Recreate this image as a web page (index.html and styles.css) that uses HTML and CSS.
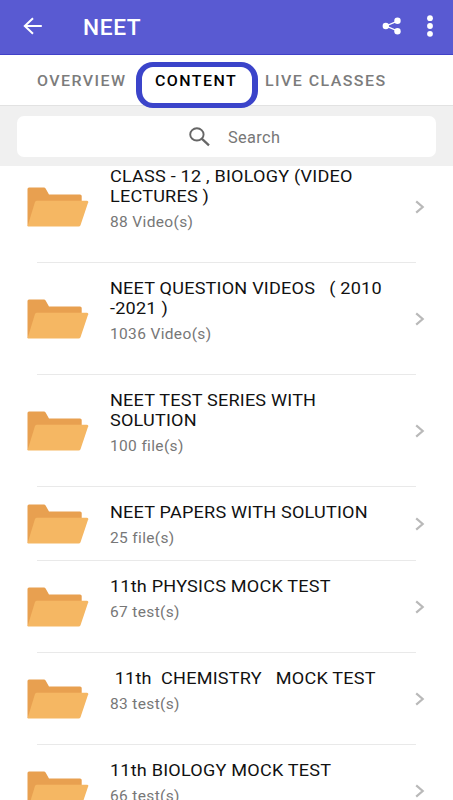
FILE: index.html
```
<!DOCTYPE html>
<html lang="en">
<head>
<meta charset="utf-8">
<title>NEET</title>
<link rel="stylesheet" href="styles.css">
</head>
<body>
<svg class="defs" width="0" height="0">
  <symbol id="folder" viewBox="0 0 62 40">
    <path fill="#e8a050" d="M.5 39V2Q.5 .5 2 .5H17Q18 .5 18.600 1.500L22 7.500H53Q54.700 7.500 54.700 9V15L45 38Z"/>
    <path fill="#f5b763" d="M.6 39.300L8 15Q8.600 13.700 10 13.700H60Q61.700 13.700 61.200 15.200L53.500 38.200Q53 39.500 51.600 39.500H1Z"/>
  </symbol>
  <symbol id="chevron" viewBox="0 0 10 14"><path d="M1.200 1.300L7.700 7L1.200 12.700" fill="none" stroke="#b9b9b9" stroke-width="2.200"/></symbol>
</svg>
<div class="app">
  <header class="bar">
    <svg class="back" viewBox="0 0 20 18"><path d="M18.800 9H2M10 1.300L1.800 9l8.200 7.700" fill="none" stroke="#fff" stroke-width="2"/></svg>
    <h1>NEET</h1>
    <svg class="share" viewBox="0 0 20 18"><path d="M16 3.800L4 9l12 5.200" fill="none" stroke="#fff" stroke-width="1.300"/><g fill="#fff"><circle cx="15.500" cy="3.800" r="3.200"/><circle cx="3.800" cy="9" r="3.200"/><circle cx="15.500" cy="14.200" r="3.200"/></g></svg>
    <svg class="more" viewBox="0 0 8 22"><g fill="#fff"><circle cx="4" cy="3.200" r="2.900"/><circle cx="4" cy="11" r="2.900"/><circle cx="4" cy="18.800" r="2.900"/></g></svg>
  </header>
  <nav class="tabs">
    <div class="tab overview"><span>OVERVIEW</span></div>
    <div class="tab active"><span>CONTENT</span></div>
    <div class="tab live"><span>LIVE CLASSES</span></div>
  </nav>
  <div class="search-area">
    <div class="search">
      <svg viewBox="0 0 22 20"><ellipse cx="7.900" cy="7.400" rx="6.700" ry="6.100" fill="none" stroke="#666" stroke-width="1.900"/><path d="M12.700 11.700L20 18.400" stroke="#666" stroke-width="2.300"/></svg>
      <span>Search</span>
    </div>
  </div>
  <main class="list">
    <section class="row tall first">
      <svg class="folder"><use href="#folder"/></svg>
      <div class="text"><h2>CLASS - 12 , BIOLOGY (VIDEO<br>LECTURES )</h2><p>88 Video(s)</p></div>
      <svg class="chev"><use href="#chevron"/></svg>
    </section>
    <section class="row tall">
      <svg class="folder"><use href="#folder"/></svg>
      <div class="text"><h2>NEET QUESTION VIDEOS   ( 2010<br>-2021 )</h2><p>1036 Video(s)</p></div>
      <svg class="chev"><use href="#chevron"/></svg>
    </section>
    <section class="row tall">
      <svg class="folder"><use href="#folder"/></svg>
      <div class="text"><h2>NEET TEST SERIES WITH<br>SOLUTION</h2><p>100 file(s)</p></div>
      <svg class="chev"><use href="#chevron"/></svg>
    </section>
    <section class="row short">
      <svg class="folder"><use href="#folder"/></svg>
      <div class="text"><h2>NEET PAPERS WITH SOLUTION</h2><p>25 file(s)</p></div>
      <svg class="chev"><use href="#chevron"/></svg>
    </section>
    <section class="row">
      <svg class="folder"><use href="#folder"/></svg>
      <div class="text"><h2>11th PHYSICS MOCK TEST</h2><p>67 test(s)</p></div>
      <svg class="chev"><use href="#chevron"/></svg>
    </section>
    <section class="row">
      <svg class="folder"><use href="#folder"/></svg>
      <div class="text"><h2> 11th  CHEMISTRY   MOCK TEST</h2><p>83 test(s)</p></div>
      <svg class="chev"><use href="#chevron"/></svg>
    </section>
    <section class="row">
      <svg class="folder"><use href="#folder"/></svg>
      <div class="text"><h2>11th BIOLOGY MOCK TEST</h2><p>66 test(s)</p></div>
      <svg class="chev"><use href="#chevron"/></svg>
    </section>
  </main>
</div>
</body>
</html>
```
FILE: styles.css
```
* { box-sizing: border-box; }
body { margin: 0; background: #fff; font-family: Roboto, "Liberation Sans", sans-serif; overflow: hidden; }
.defs { display: block; }
.app { display: flex; flex-direction: column; height: 800px; overflow: hidden; }
h1, h2, p { margin: 0; }
.bar { flex: none; display: flex; align-items: center; height: 55px; padding: 0 19px 2px 23px; background: #595ad2; border-bottom: 1px solid #4141c8; color: #fff; }
.back { width: 20px; height: 18px; }
h1 { flex: 1; margin-left: 40px; padding-top: 2px; font-size: 21.5px; font-weight: 500; letter-spacing: .6px; transform: scaleX(1.055); transform-origin: left; }
.share { width: 20px; height: 18px; margin-right: 24px; }
.more { width: 8px; height: 22px; }
.tabs { flex: none; display: flex; align-items: flex-start; height: 51px; padding: 7px 0 0 37px; border-bottom: 1px solid #e2e2e2; }
.tab { height: 37px; line-height: 39px; font-size: 15.5px; font-weight: 500; letter-spacing: 1.4px; color: #7c7c7c; white-space: nowrap; }
.tab span { display: inline-block; transform: scaleX(1.03); transform-origin: left; }
.overview { width: 99px; }
.active { position: relative; z-index: 1; width: 122px; height: 46px; border: 5px solid #3b44ca; border-width: 5px 6px; border-radius: 17px; line-height: 29px; padding-left: 13px; color: #000; }
.live { margin-left: 7px; }
.search-area { flex: none; height: 60px; padding: 10px 17px 0; background: #f0f0f0; }
.search { display: flex; align-items: center; height: 41px; padding-left: 172px; border-radius: 7px; background: #fff; color: #777; font-size: 16px; letter-spacing: .35px; }
.search svg { width: 22px; height: 20px; margin-right: 17px; }
.search span { padding-top: 2px; transform: scaleX(1.02); transform-origin: left; }
.list { flex: 1; min-height: 0; overflow: hidden; }
.row { display: flex; align-items: center; height: 92px; padding-left: 27px; background: linear-gradient(#e9e9e9, #e9e9e9) 37px 100% / 379px 1px no-repeat; }
.tall { height: 112px; }
.short { height: 74px; }
.first { margin-top: -15px; }
.folder { flex: none; width: 62px; height: 40px; }
.text { align-self: flex-start; width: 305px; padding: 16px 0 0 21px; }
h2 { font-size: 17px; font-weight: 400; line-height: 20px; letter-spacing: .2px; color: #111; white-space: pre; transform: translateY(-.6px) scaleX(1.063); transform-origin: left; }
p { margin-top: 5px; font-size: 15.5px; line-height: 20px; letter-spacing: .35px; color: #777; }
.chev { flex: none; width: 10px; height: 14px; margin-left: 21px; }
```
